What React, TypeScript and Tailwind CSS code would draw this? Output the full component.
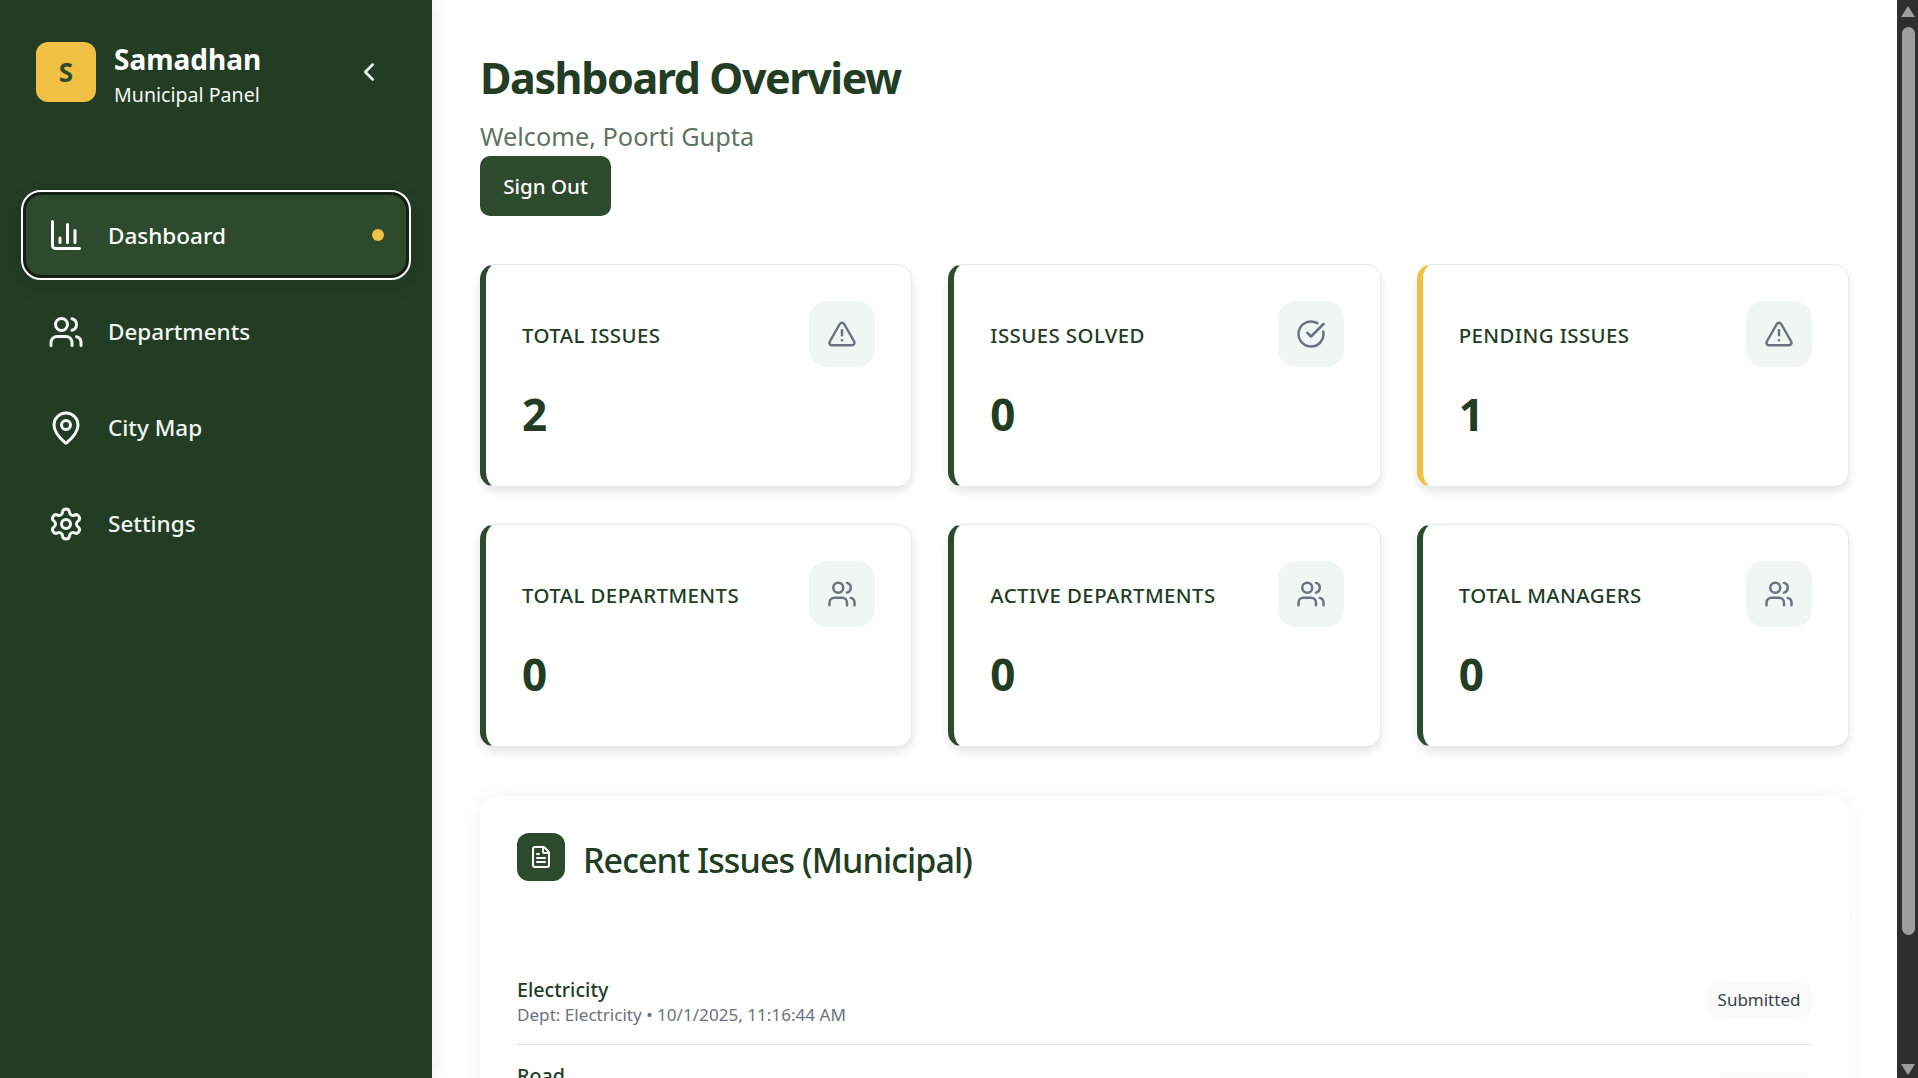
import { AlertTriangle, CheckCircle, ChevronLeft, BarChart3, Users, MapPin, Settings, FileText } from "lucide-react";

const font = "font-['Noto_Sans','Open_Sans',sans-serif]";

const cards = [
  { label: "TOTAL ISSUES", value: "2", Icon: AlertTriangle, yellow: false },
  { label: "ISSUES SOLVED", value: "0", Icon: CheckCircle, yellow: false },
  { label: "PENDING ISSUES", value: "1", Icon: AlertTriangle, yellow: true },
  { label: "TOTAL DEPARTMENTS", value: "0", Icon: Users, yellow: false },
  { label: "ACTIVE DEPARTMENTS", value: "0", Icon: Users, yellow: false },
  { label: "TOTAL MANAGERS", value: "0", Icon: Users, yellow: false },
];

function Card({ label, value, Icon, yellow }: (typeof cards)[number]) {
  return (
    <div className={`h-[223px] rounded-[15px] bg-white border border-[#e8e8f0] border-l-[6px] shadow-[0_5px_10px_rgba(0,0,0,0.1)] pl-[36px] pr-[36px] pt-[36px] ${yellow ? "border-l-[#f0c043]" : "border-l-[#2d4a2d]"}`}>
      <div className="flex items-center justify-between">
        <span className="pt-[2px] text-[20.4px] leading-[30px] font-medium tracking-[0.42px] text-[#223d24]">{label}</span>
        <div className="w-[66px] h-[66px] rounded-[18px] bg-[#f0f6f2] flex items-center justify-center">
          <Icon className="w-[30px] h-[30px] text-[#6b7280]" strokeWidth={2} />
        </div>
      </div>
      <div className="mt-[17px] text-[44px] leading-[60px] font-bold text-[#223d24]">{value}</div>
    </div>
  );
}

function NavItem({ Icon, label }: { Icon: typeof Users; label: string }) {
  return (
    <div className="h-[90px] flex items-center pl-[25px]">
      <Icon className="w-[36px] h-[36px] text-[#f3f7f3]" strokeWidth={2} />
      <span className="ml-[24px] text-[22.5px] font-medium text-[#f3f7f3]">{label}</span>
    </div>
  );
}

function Row({ title, sub, status, last }: { title: string; sub: string; status: string; last?: boolean }) {
  return (
    <div className={`flex items-center justify-between shrink-0 ${last ? "h-[85px]" : "h-[86px] border-b border-[#e4e6ee]"}`}>
      <div>
        <div className="text-[19.7px] leading-[26px] font-medium text-[#223d24]">{title}</div>
        <div className="text-[17.1px] leading-[24px] text-[#6b7280]">{sub}</div>
      </div>
      <span className={`h-[36px] rounded-[10px] bg-[#f9fbf8] text-[17px] leading-[36px] text-center text-[#374151] ${last ? "w-[96px] mt-[4px]" : "w-[106px] mb-[4px]"}`}>{status}</span>
    </div>
  );
}

export default function App() {
  return (
    <div className={`flex h-screen overflow-hidden bg-white ${font}`}>
      <aside className="w-[432px] shrink-0 bg-[#223d24] shadow-[0_0_24px_rgba(0,0,0,0.08)] z-10 px-[23px]">
        <div className="flex items-center h-[144px] pl-[13px]">
          <div className="w-[60px] h-[60px] rounded-[12px] bg-[#f0c043] flex items-center justify-center text-[26px] font-bold text-[#2d4a2d]">S</div>
          <div className="ml-[18px] flex-1 pt-[10px]">
            <div className="text-[28px] leading-[36px] font-bold text-white mt-[-2px]">Samadhan</div>
            <div className="text-[19.6px] leading-[35px] text-[#f3f7f3]">Municipal Panel</div>
          </div>
          <ChevronLeft className="w-[30px] h-[30px] text-[#f3f7f3] mr-[25px]" strokeWidth={2} />
        </div>
        <nav className="mt-[48px]">
          <div className="h-[86px] flex items-center pl-[23px] pr-[22px] rounded-[18px] bg-[#2d4a2d] border-[3px] border-[#151f16] outline-[2px] outline-white shadow-[0_6px_20px_rgba(0,0,0,0.15)]">
            <BarChart3 className="w-[36px] h-[36px] text-white -ml-[1px]" strokeWidth={2} />
            <span className="ml-[24px] flex-1 pt-[2px] text-[22.5px] font-medium text-white">Dashboard</span>
            <span className="w-[12px] h-[12px] rounded-full bg-[#f0c043]" />
          </div>
          <div className="mt-[9px]">
            <NavItem Icon={Users} label="Departments" />
            <div className="mt-[6px]"><NavItem Icon={MapPin} label="City Map" /></div>
            <div className="mt-[6px]"><NavItem Icon={Settings} label="Settings" /></div>
          </div>
        </nav>
      </aside>
      <main className="flex-1 min-w-0 h-full overflow-hidden pl-[48px] pr-[48px] pt-[48px] flex flex-col">
        <h1 className="shrink-0 text-[43px] leading-[60px] font-bold tracking-[-1.4px] text-[#223d24]">Dashboard Overview</h1>
        <p className="shrink-0 mt-[7px] text-[25.3px] leading-[43px] text-[#5f7363]">Welcome, Poorti Gupta</p>
        <button className="shrink-0 -mt-[2px] w-[131px] h-[60px] pt-[1px] rounded-[10px] bg-[#2d4a2d] text-white text-[20.5px] font-medium">Sign Out</button>
        <div className="shrink-0 mt-[48px] grid grid-cols-3 gap-x-[36px] gap-y-[37px]">
          {cards.map((c) => <Card key={c.label} {...c} />)}
        </div>
        <section className="shrink-0 mt-[49px] rounded-t-[18px] bg-white shadow-[0_0_24px_rgba(0,0,0,0.05)] flex flex-col">
          <div className="h-[121px] shrink-0 px-[37px] pt-[2px] flex items-center border-b border-[#f8f8f8]">
            <div className="w-[48px] h-[48px] rounded-[12px] bg-[#2d4a2d] flex items-center justify-center">
              <FileText className="w-[24px] h-[24px] text-white" strokeWidth={2} />
            </div>
            <h2 className="ml-[18px] mt-[6px] text-[34px] font-medium tracking-[-0.9px] text-[#223d24]">Recent Issues (Municipal)</h2>
          </div>
          <div className="px-[37px] pt-[42px]">
            <Row title="Electricity" sub="Dept: Electricity • 10/1/2025, 11:16:44 AM" status="Submitted" />
            <Row title="Road" sub="Dept: Road" status="Pending" last />
          </div>
        </section>
      </main>
      <div className="w-[21px] shrink-0 h-full bg-[#2e2e2e] flex flex-col items-center z-20">
        <svg className="w-[14px] h-[11px] mt-[6px] shrink-0" viewBox="0 0 14 11"><path d="M7 0 14 11H0z" fill="#9e9e9e" /></svg>
        <div className="mt-[10px] ml-[1px] w-[13px] h-[908px] rounded-[7px] bg-[#9e9e9e]" />
        <div className="flex-1" />
        <svg className="w-[14px] h-[11px] mb-[3px] shrink-0" viewBox="0 0 14 11"><path d="M0 0h14L7 11z" fill="#9e9e9e" /></svg>
      </div>
    </div>
  );
}
